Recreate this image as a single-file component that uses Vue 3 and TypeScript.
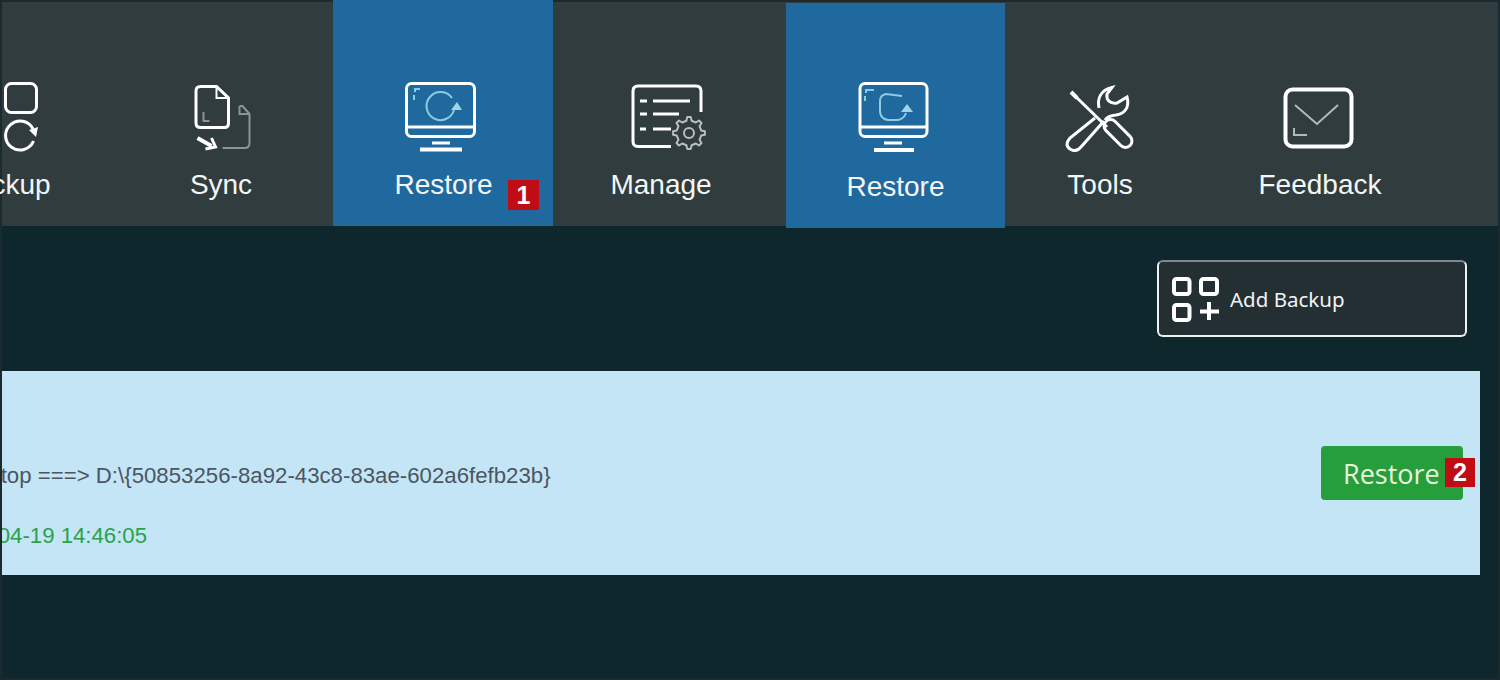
<script setup lang="ts">
const date = '2021-04-19 14:46:05'

// Outline of an eight-toothed gear, drawn as one line like the reference icon.
const gearPath = (cx: number, cy: number, outer: number, inner: number): string => {
  const teeth = 8
  const points: string[] = []
  for (let i = 0; i < teeth; i++) {
    const base = (i * 2 * Math.PI) / teeth
    const step = (2 * Math.PI) / teeth
    const offsets: [number, number][] = [
      [-0.27, inner],
      [-0.14, outer],
      [0.14, outer],
      [0.27, inner],
    ]
    for (const [f, r] of offsets) {
      const a = base + f * step
      points.push(`${(cx + r * Math.cos(a)).toFixed(1)} ${(cy + r * Math.sin(a)).toFixed(1)}`)
    }
  }
  return `M${points.join(' L')} Z`
}
const gear = gearPath(689, 133, 16, 12.5)
</script>

<template>
  <div class="screen">
    <header class="toolbar">
      <div class="tab tab-backup">
        <svg class="icon" viewBox="-25 80 90 72">
          <rect x="5.500" y="83.500" width="31" height="29" rx="6" class="w3" />
          <path d="M33 129 A14.500 14.500 0 1 0 33.500 141" class="w3" />
          <path d="M29 130 L38 127 L36 137 Z" fill="#fff" />
        </svg>
        <span class="label label-backup">Backup</span>
      </div>
      <div class="tab tab-sync">
        <svg class="icon" viewBox="176.500 80 90 72">
          <path d="M217 86.500 H201 Q196.500 86.500 196.500 91 V123 Q196.500 127.500 201 127.500 H225 Q229 127.500 229 123 V98 Z" class="w3" />
          <path d="M217 87 V98 H229" class="w2" />
          <path d="M204 112 V121 H210" class="g2" />
          <path d="M240 106 H243 L250 114 V143 Q250 148 245 148 H223" class="g2" />
          <path d="M240 106 V114 H250" class="g2" />
          <path d="M198 138 L212 146" class="w4" />
          <path d="M206 149 L216 147 L212 138" class="w3" />
        </svg>
        <span class="label">Sync</span>
      </div>
      <div class="tab tab-restore active">
        <svg class="icon" viewBox="398 80 90 72">
          <rect x="406.500" y="83.500" width="68" height="53" rx="5" class="w3" />
          <path d="M406.500 127 H474.500 M432 143 H450" class="w3" />
          <path d="M420 149.500 H462" class="w4" />
          <path d="M420 89 H415 V92 M414 95 V100" class="b2" />
          <path d="M452 98 A14 14 0 1 0 454 110" class="b2" />
          <path d="M451 110 L457 102 L462 110 Z" fill="#9ed4e6" />
        </svg>
        <span class="label label-shift">Restore</span>
        <span class="badge badge-one">1</span>
      </div>
      <div class="tab tab-manage">
        <svg class="icon" viewBox="616 80 90 72">
          <path d="M671 146.500 H638 Q633 146.500 633 141.500 V91 Q633 86 638 86 H696 Q701 86 701 91 V112" class="w3" />
          <path d="M653 101 H690 M653 114 H679 M653 129 H671" class="w3" />
          <path d="M640 101 H647 M640 114 H647 M640 129 H646" class="w3" />
          <path :d="gear" class="gear" />
          <circle cx="689" cy="133" r="5" class="gear" />
        </svg>
        <span class="label">Manage</span>
      </div>
      <div class="tab tab-restore-two active">
        <svg class="icon" viewBox="851 80 90 72">
          <rect x="860" y="83.500" width="67" height="53" rx="5" class="w3" />
          <path d="M860 127 H927 M884 143 H902" class="w3" />
          <path d="M874 150 H914" class="w4" />
          <path d="M874 90 H866 V93 M865 96 V101" class="b2" />
          <path d="M902 96 L886 94 Q880 95 880 101 V112 Q881 119 888 120 H898 Q904 119 906 113" class="b2" />
          <path d="M901 112 L907 104 L913 112 Z" fill="#9ed4e6" />
        </svg>
        <span class="label">Restore</span>
      </div>
      <div class="tab tab-tools">
        <svg class="icon" viewBox="1055 80 90 72">
          <path d="M1073 94 L1107 127" class="w3" />
          <path d="M1071 92 L1077 98" class="w4" />
          <rect x="1101" y="127" width="34" height="13" rx="6.500" transform="rotate(45 1118 133.500)" class="w3" />
          <path d="M1095 118 L1070 138 Q1064 145 1070 149 Q1076 153 1081 147 L1104 121" class="w3" />
          <path d="M1099 108 C1097 98 1101 90 1112 87.500 L1107 94 C1106 100 1110 104 1117 103 L1127 97 C1130 108 1124 114 1116 115 C1110 115.500 1107 117 1105 120" class="w3" />
        </svg>
        <span class="label">Tools</span>
      </div>
      <div class="tab tab-feedback">
        <svg class="icon" viewBox="1275 80 90 72">
          <rect x="1285.500" y="89.500" width="66" height="57" rx="7" class="w4" />
          <path d="M1295 105 L1317 124 L1338 105" class="g2 light" />
          <path d="M1294 128 V135 H1307" class="g2 light" />
        </svg>
        <span class="label">Feedback</span>
      </div>
    </header>

    <main class="content">
      <div class="actions">
        <button class="add-btn">
          <svg class="add-icon" viewBox="1170 274 50 46">
            <rect x="1173" y="277" width="15.500" height="15" rx="2.500" class="w4" />
            <rect x="1200" y="277" width="16" height="15" rx="2.500" class="w4" />
            <rect x="1173" y="303" width="15.500" height="15" rx="2.500" class="w4" />
            <path d="M1199 309.500 H1218 M1208 300 V318" class="w4" />
          </svg>
          <span>Add Backup</span>
        </button>
      </div>

      <section class="task">
        <div class="task-text">
          <p class="path">Desktop ===&gt; D:\{50853256-8a92-43c8-83ae-602a6fefb23b}</p>
          <p class="date">{{ date }}</p>
        </div>
        <button class="restore-btn">
          Restore
          <span class="badge badge-two">2</span>
        </button>
      </section>
    </main>
  </div>
</template>

<style scoped>
.screen {
  width: 1500px;
  height: 680px;
  overflow: hidden;
  background: #0d272c;
  font-family: "Liberation Sans", Arial, sans-serif;
  outline: 2px solid #1a2a2f;
  outline-offset: -2px;
}
.toolbar {
  display: flex;
  height: 226px;
  background: #303c3e;
}
.tab {
  position: relative;
  flex: none;
  box-sizing: border-box;
  height: 226px;
  padding-top: 80px;
  display: flex;
  flex-direction: column;
  align-items: center;
  color: #f4f6f6;
}
.active { background: #20699f; }
.tab-backup { width: 220px; margin-left: -90px; }
.tab-sync { width: 203px; padding-right: 21px; }
.tab-restore { width: 220px; }
.tab-manage { width: 233px; padding-right: 17px; }
.tab-restore-two {
  width: 219px;
  height: 225px;
  margin-top: 3px;
  padding-top: 77px;
}
.tab-restore-two .label { margin-top: 19px; }
.tab-tools { width: 190px; }
.tab-feedback { width: 250px; }
.icon { width: 90px; height: 72px; display: block; flex: none; }
.label {
  margin-top: 17px;
  font-size: 28px;
  line-height: 32px;
  white-space: nowrap;
}
.label-backup { margin-left: -32px; }
.label-shift { margin-left: 1px; }
.w2, .w3, .w4, .g2, .b2, .gear { fill: none; }
.w2 { stroke: #fff; stroke-width: 2; }
.w3 { stroke: #fff; stroke-width: 3; }
.w4 { stroke: #fff; stroke-width: 4; }
.g2 { stroke: #8b9496; stroke-width: 2; }
.light { stroke: #b4babb; }
.b2 { stroke: #8ccbe0; stroke-width: 2; }
.gear { stroke: #b9bebf; stroke-width: 2; stroke-linejoin: round; }
.badge {
  position: absolute;
  display: flex;
  align-items: center;
  justify-content: center;
  background: #c00d15;
  color: #fff;
  font-family: "Liberation Sans", Arial, sans-serif;
  font-weight: 700;
  font-size: 25px;
}
.badge-one {
  left: 175px;
  top: 180px;
  width: 31px;
  height: 30px;
}
.content { display: block; }
.actions {
  display: flex;
  justify-content: flex-end;
  padding: 34px 33px 34px 0;
}
.add-btn {
  box-sizing: border-box;
  width: 310px;
  height: 77px;
  padding: 0 0 0 12px;
  display: flex;
  align-items: center;
  gap: 9px;
  background: #242f33;
  border: 2px solid #eef1f1;
  border-top-color: #7d8a8d;
  border-radius: 6px;
  color: #f2f4f4;
  font-family: "Noto Sans", sans-serif;
  font-size: 20.500px;
  text-align: left;
}
.add-icon { width: 50px; height: 46px; flex: none; }
.task {
  box-sizing: border-box;
  width: 1480px;
  height: 204px;
  display: flex;
  justify-content: space-between;
  align-items: center;
  overflow: hidden;
  background: #c3e5f5;
  padding-right: 17px;
}
.task-text {
  align-self: flex-start;
  padding-top: 90px;
  margin-left: -50px;
  font-size: 22.200px;
  line-height: 30px;
}
.path { margin: 0; color: #4b5662; white-space: nowrap; letter-spacing: 0.02px; }
.date { margin: 30px 0 0 -9px; color: #2aa24a; white-space: nowrap; }
.restore-btn {
  position: relative;
  box-sizing: border-box;
  width: 142px;
  height: 54px;
  padding: 0 0 0 22px;
  background: #269e3c;
  border: none;
  border-radius: 4px;
  color: #e9f4dd;
  font-family: "Open Sans", sans-serif;
  font-size: 27px;
  text-align: left;
}
.badge-two {
  left: 124px;
  top: 12px;
  width: 30px;
  height: 29px;
}
</style>
